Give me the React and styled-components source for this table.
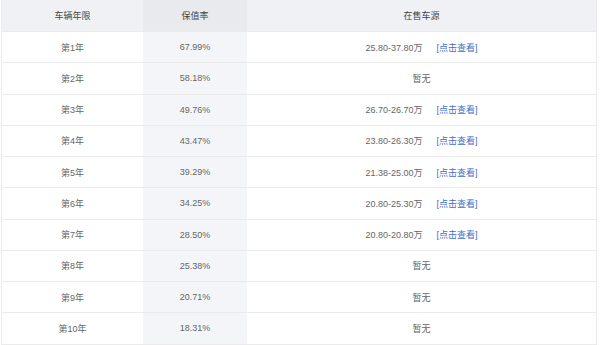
import React from "react";
import styled, { createGlobalStyle } from "styled-components";

const Global = createGlobalStyle`
  html, body { margin: 0; padding: 0; background: #fff; }
  body { font-family: "Liberation Sans", "Noto Sans CJK SC", sans-serif; }
`;

const Table = styled.div`
  margin-left: 1px;
  width: 596px;
  border-left: 1px solid #ebebeb;
  border-right: 1px solid #ebebeb;
  box-sizing: border-box;
  font-size: 9px;
  color: #666;
`;

const Row = styled.div`
  display: grid;
  grid-template-columns: 141px 104px 1fr;
  height: ${(p) => (p.$head ? "32px" : "31.25px")};
  box-sizing: border-box;
  border-bottom: 1px solid #ebebeb;
  background: ${(p) => (p.$head ? "#f0f1f4" : "#fff")};
  color: ${(p) => (p.$head ? "#444" : "#666")};
`;

const Cell = styled.div`
  display: flex;
  align-items: center;
  justify-content: center;
  white-space: nowrap;
  background: ${(p) => (p.$shade ? (p.$head ? "#e9eaee" : "#f4f5f8") : "transparent")};
`;

const Link = styled.a`
  color: #3f6fc6;
  margin-left: 14px;
  text-decoration: none;
  cursor: pointer;
`;

const data = [
  ["第1年", "67.99%", "25.80-37.80万"],
  ["第2年", "58.18%", null],
  ["第3年", "49.76%", "26.70-26.70万"],
  ["第4年", "43.47%", "23.80-26.30万"],
  ["第5年", "39.29%", "21.38-25.00万"],
  ["第6年", "34.25%", "20.80-25.30万"],
  ["第7年", "28.50%", "20.80-20.80万"],
  ["第8年", "25.38%", null],
  ["第9年", "20.71%", null],
  ["第10年", "18.31%", null],
];

export default function App() {
  return (
    <>
      <Global />
      <Table>
        <Row $head>
          <Cell>车辆年限</Cell>
          <Cell $shade $head>保值率</Cell>
          <Cell>在售车源</Cell>
        </Row>
        {data.map(([y, r, p]) => (
          <Row key={y}>
            <Cell>{y}</Cell>
            <Cell $shade>{r}</Cell>
            <Cell>
              {p ? (
                <>
                  <span>{p}</span>
                  <Link>[点击查看]</Link>
                </>
              ) : (
                "暂无"
              )}
            </Cell>
          </Row>
        ))}
      </Table>
    </>
  );
}
